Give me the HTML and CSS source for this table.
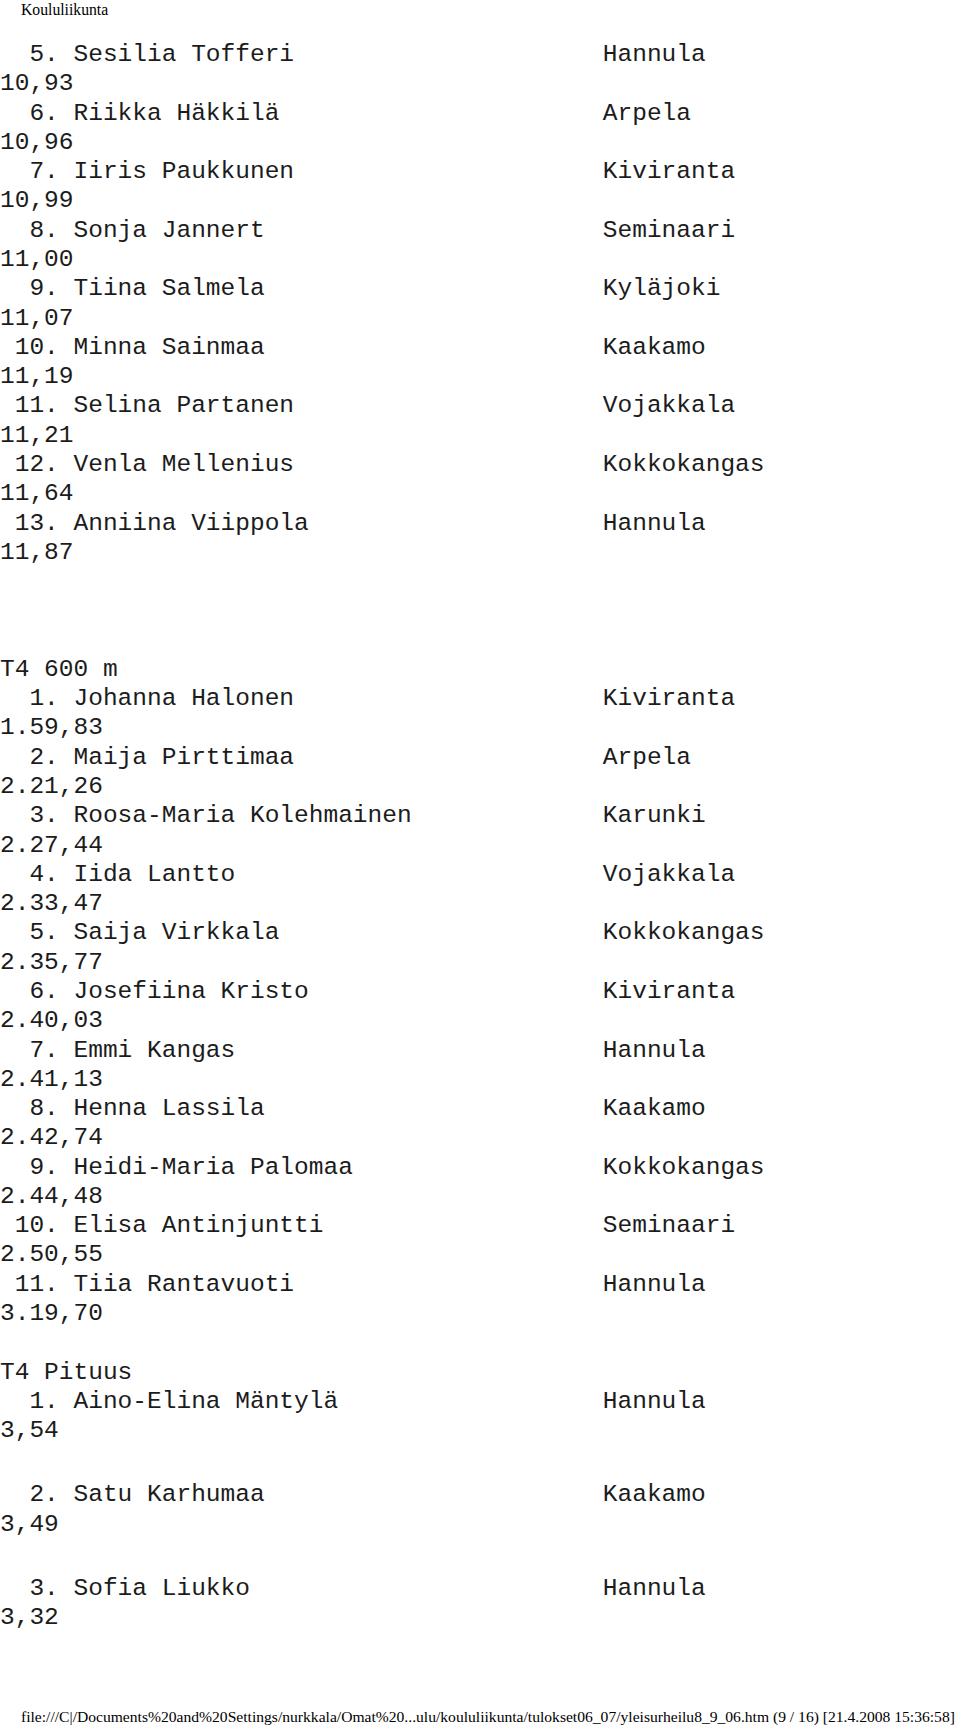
FILE: index.html
```html
<!DOCTYPE html>
<html lang="fi">
<head>
<meta charset="utf-8">
<title>Koululiikunta</title>
<link rel="stylesheet" href="styles.css">
</head>
<body>
<div class="page">
  <header class="page-head">Koululiikunta</header>
  <main class="results">
    <section class="event">
      <div class="entry"><div class="line"><span class="name">  5. Sesilia Tofferi</span><span class="club">Hannula</span></div><div class="time">10,93</div></div>
      <div class="entry"><div class="line"><span class="name">  6. Riikka Häkkilä</span><span class="club">Arpela</span></div><div class="time">10,96</div></div>
      <div class="entry"><div class="line"><span class="name">  7. Iiris Paukkunen</span><span class="club">Kiviranta</span></div><div class="time">10,99</div></div>
      <div class="entry"><div class="line"><span class="name">  8. Sonja Jannert</span><span class="club">Seminaari</span></div><div class="time">11,00</div></div>
      <div class="entry"><div class="line"><span class="name">  9. Tiina Salmela</span><span class="club">Kyläjoki</span></div><div class="time">11,07</div></div>
      <div class="entry"><div class="line"><span class="name"> 10. Minna Sainmaa</span><span class="club">Kaakamo</span></div><div class="time">11,19</div></div>
      <div class="entry"><div class="line"><span class="name"> 11. Selina Partanen</span><span class="club">Vojakkala</span></div><div class="time">11,21</div></div>
      <div class="entry"><div class="line"><span class="name"> 12. Venla Mellenius</span><span class="club">Kokkokangas</span></div><div class="time">11,64</div></div>
      <div class="entry"><div class="line"><span class="name"> 13. Anniina Viippola</span><span class="club">Hannula</span></div><div class="time">11,87</div></div>
    </section>

    <section class="event event-far">
      <h2 class="event-title">T4 600 m</h2>
      <div class="entry"><div class="line"><span class="name">  1. Johanna Halonen</span><span class="club">Kiviranta</span></div><div class="time">1.59,83</div></div>
      <div class="entry"><div class="line"><span class="name">  2. Maija Pirttimaa</span><span class="club">Arpela</span></div><div class="time">2.21,26</div></div>
      <div class="entry"><div class="line"><span class="name">  3. Roosa-Maria Kolehmainen</span><span class="club">Karunki</span></div><div class="time">2.27,44</div></div>
      <div class="entry"><div class="line"><span class="name">  4. Iida Lantto</span><span class="club">Vojakkala</span></div><div class="time">2.33,47</div></div>
      <div class="entry"><div class="line"><span class="name">  5. Saija Virkkala</span><span class="club">Kokkokangas</span></div><div class="time">2.35,77</div></div>
      <div class="entry"><div class="line"><span class="name">  6. Josefiina Kristo</span><span class="club">Kiviranta</span></div><div class="time">2.40,03</div></div>
      <div class="entry"><div class="line"><span class="name">  7. Emmi Kangas</span><span class="club">Hannula</span></div><div class="time">2.41,13</div></div>
      <div class="entry"><div class="line"><span class="name">  8. Henna Lassila</span><span class="club">Kaakamo</span></div><div class="time">2.42,74</div></div>
      <div class="entry"><div class="line"><span class="name">  9. Heidi-Maria Palomaa</span><span class="club">Kokkokangas</span></div><div class="time">2.44,48</div></div>
      <div class="entry"><div class="line"><span class="name"> 10. Elisa Antinjuntti</span><span class="club">Seminaari</span></div><div class="time">2.50,55</div></div>
      <div class="entry"><div class="line"><span class="name"> 11. Tiia Rantavuoti</span><span class="club">Hannula</span></div><div class="time">3.19,70</div></div>
    </section>

    <section class="event event-near event-field">
      <h2 class="event-title">T4 Pituus</h2>
      <div class="entry"><div class="line"><span class="name">  1. Aino-Elina Mäntylä</span><span class="club">Hannula</span></div><div class="time">3,54</div></div>
      <div class="entry"><div class="line"><span class="name">  2. Satu Karhumaa</span><span class="club">Kaakamo</span></div><div class="time">3,49</div></div>
      <div class="entry"><div class="line"><span class="name">  3. Sofia Liukko</span><span class="club">Hannula</span></div><div class="time">3,32</div></div>
    </section>
  </main>
  <footer class="page-foot">file:///C|/Documents%20and%20Settings/nurkkala/Omat%20...ulu/koululiikunta/tulokset06_07/yleisurheilu8_9_06.htm (9 / 16) [21.4.2008 15:36:58]</footer>
</div>
</body>
</html>
```

FILE: styles.css
```css
html, body {
  margin: 0;
  padding: 0;
  background: #ffffff;
}

.page {
  display: flex;
  flex-direction: column;
  min-height: 1729px;
  box-sizing: border-box;
  padding-bottom: 3px;
}

.page-head {
  font-family: "Liberation Serif", "Times New Roman", serif;
  font-size: 15.7px;
  line-height: 18px;
  color: #000;
  padding: 1px 0 0 21px;
  height: 39px;
}

.results {
  font-family: "Liberation Mono", "Courier New", monospace;
  font-size: 24.5px;
  line-height: 29.28px;
  color: #1c1c1c;
}

.event {
  margin: 0;
}

.event-far {
  margin-top: 87.8px;
}

.event-near {
  margin-top: 29.28px;
}

.event-title {
  margin: 0;
  font: inherit;
}

.line {
  display: grid;
  grid-template-columns: 41ch 1fr;
}

.name {
  white-space: pre;
}

.club {
  white-space: pre;
}

.event-field .entry + .entry {
  margin-top: 35px;
}

.page-foot {
  margin-top: auto;
  font-family: "Liberation Serif", "Times New Roman", serif;
  font-size: 15.6px;
  line-height: 18px;
  color: #000;
  padding-left: 21px;
  white-space: nowrap;
}
```
